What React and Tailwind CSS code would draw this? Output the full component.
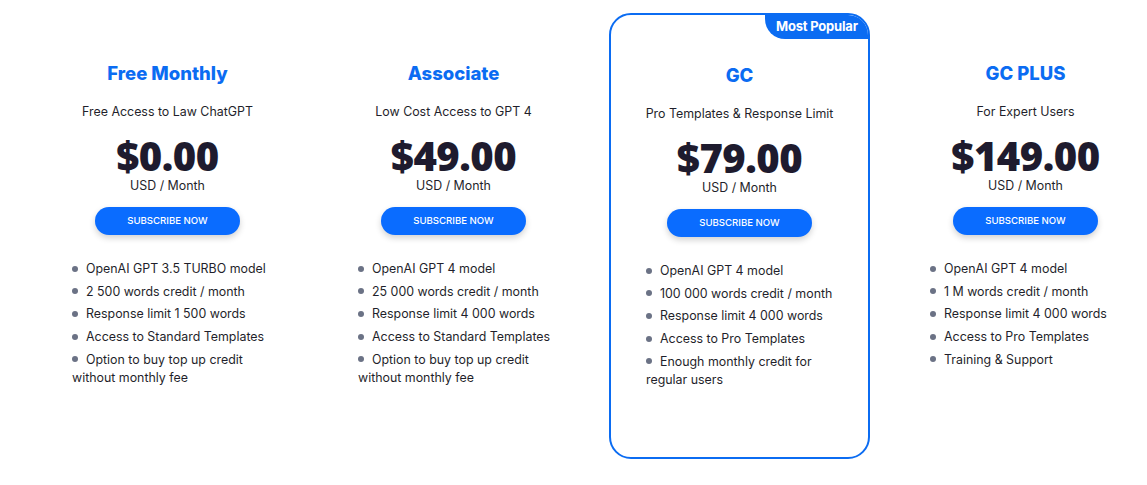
import React from 'react'

const PLANS = [
  {
    name: 'Free Monthly',
    tagline: 'Free Access to Law ChatGPT',
    price: '$0.00',
    features: [
      'OpenAI GPT 3.5 TURBO model',
      '2 500 words credit / month',
      'Response limit 1 500 words',
      'Access to Standard Templates',
      'Option to buy top up credit without monthly fee',
    ],
  },
  {
    name: 'Associate',
    tagline: 'Low Cost Access to GPT 4',
    price: '$49.00',
    features: [
      'OpenAI GPT 4 model',
      '25 000 words credit / month',
      'Response limit 4 000 words',
      'Access to Standard Templates',
      'Option to buy top up credit without monthly fee',
    ],
  },
  {
    name: 'GC',
    tagline: 'Pro Templates & Response Limit',
    price: '$79.00',
    popular: true,
    features: [
      'OpenAI GPT 4 model',
      '100 000 words credit / month',
      'Response limit 4 000 words',
      'Access to Pro Templates',
      'Enough monthly credit for regular users',
    ],
  },
  {
    name: 'GC PLUS',
    tagline: 'For Expert Users',
    price: '$149.00',
    features: [
      'OpenAI GPT 4 model',
      '1 M words credit / month',
      'Response limit 4 000 words',
      'Access to Pro Templates',
      'Training & Support',
    ],
  },
]

const PlanCard = ({ plan }) => {
  return (
    <div
      className={`relative w-[261px] h-[446px] shrink-0 flex flex-col items-center pt-[48px] rounded-[22px] overflow-hidden
      ${plan.popular ? 'border-2 border-[#0b6cf2]' : ''}`}
    >
      {plan.popular && (
        <div className="absolute top-0 right-0 h-[24px] w-[103px] pl-[11px] flex items-center bg-[#0b6cf2] rounded-bl-[20px] text-white text-[13px] font-bold font-['Inter'] tracking-[-0.2px]">
          Most Popular
        </div>
      )}
      <h2 className="text-[18.5px] leading-[24px] font-extrabold text-[#0b6cf2] font-['Inter']">
        {plan.name}
      </h2>
      <p className="mt-[17px] text-[12.4px] leading-[20px] text-[#1f1f2b] font-['Inter']">{plan.tagline}</p>
      <p className="mt-[12px] text-[40px] leading-[44px] font-extrabold text-[#1e1b2e] font-['Open_Sans'] tracking-[-0.5px]">
        {plan.price}
      </p>
      <p className="text-[12.4px] leading-[16px] text-[#1f1f2b] font-['Inter']">USD / Month</p>
      <button className="mt-[13px] w-[145px] h-[28px] rounded-full bg-[#0a6cff] text-white text-[9.6px] font-medium font-['Inter'] shadow-[0_3px_6px_rgba(0,0,0,0.18)]">
        SUBSCRIBE NOW
      </button>
      <ul className="mt-[25px] self-start ml-[35px] w-[200px] flex flex-col gap-[4.7px] font-['Inter'] text-[12.4px] leading-[18px] text-[#1f1f2b]">
        {plan.features.map((f) => (
          <li key={f}>
            <span className="inline-block w-[6px] h-[6px] rounded-full bg-[#6b7285] mr-[8px] align-middle relative -top-[1px]"></span>
            {f}
          </li>
        ))}
      </ul>
    </div>
  )
}

export default function App() {
  return (
    <div className="w-[1147px] h-[485px] bg-white overflow-hidden">
      <div className="flex gap-[25px] pl-[37px] pt-[13px]">
        {PLANS.map((p) => (
          <PlanCard key={p.name} plan={p} />
        ))}
      </div>
    </div>
  )
}
